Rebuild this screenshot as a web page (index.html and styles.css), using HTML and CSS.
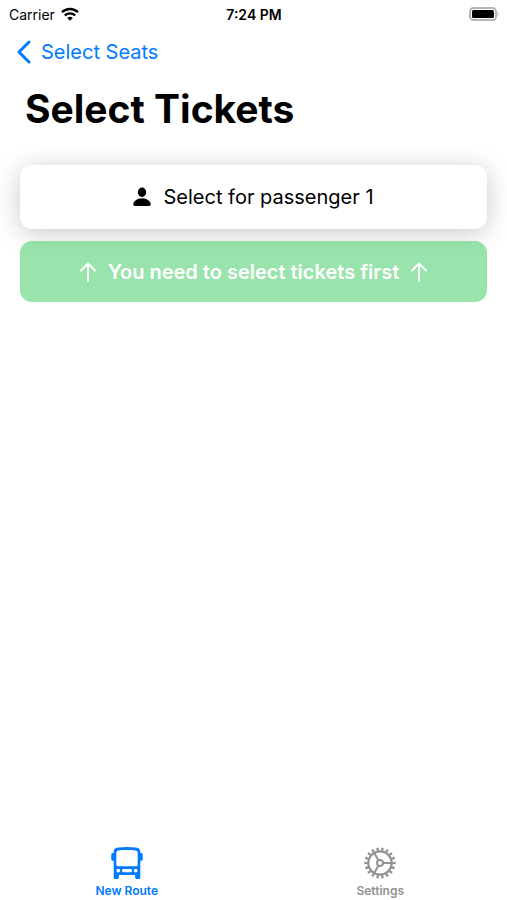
FILE: index.html
```html
<!DOCTYPE html>
<html lang="en">
<head>
    <meta charset="UTF-8">
    <meta name="viewport" content="width=device-width, initial-scale=1.0">
    <title>Select Tickets</title>
    <link rel="stylesheet" href="styles.css">
</head>
<body>

    <div class="status-bar">
        <div class="carrier">
            <span>Carrier</span>
            <svg class="wifi" viewBox="0 0 18 14" aria-hidden="true">
                <path d="M1 5.2a11.5 11.5 0 0 1 16 0" />
                <path d="M3.8 8.5a7.5 7.5 0 0 1 10.4 0" />
                <path class="dot" d="M9 13.8L6.2 11a4 4 0 0 1 5.6 0z" />
            </svg>
        </div>
        <div class="time">7:24 PM</div>
        <div class="power">
            <svg class="battery" viewBox="0 0 30 14" aria-hidden="true">
                <rect x="1" y="1" width="26" height="12" rx="3.6" fill="#fff" stroke="#b5b5b5" stroke-width="2" />
                <rect x="3" y="3" width="22" height="8" rx="1.6" />
                <path d="M28.5 4.8a2.6 2.6 0 0 1 0 4.4z" fill="#b5b5b5" />
            </svg>
        </div>
    </div>

    <header class="header">
        <a class="back" href="#">
            <svg class="chevron" viewBox="0 0 14 24" aria-hidden="true"><path d="M12 2L2 12l10 10" /></svg>
            Select Seats
        </a>
        <h1>Select Tickets</h1>
    </header>

    <main class="content">
        <button class="btn passenger" type="button">
            <svg class="person" viewBox="0 0 18 20" aria-hidden="true">
                <ellipse cx="9" cy="5.2" rx="4.2" ry="4.7" />
                <path d="M2.4 19C1 19 0.3 18.3 0.3 17.2 0.3 14.6 3.7 11.3 9 11.3s8.7 3.3 8.7 5.9c0 1.1-.7 1.8-2.1 1.8z" />
            </svg>
            Select for passenger 1
        </button>
        <button class="btn confirm" type="button" disabled>
            <svg class="arrow" viewBox="0 0 16 20" aria-hidden="true"><path d="M8 19V1.5M1 8.5l7-7 7 7" /></svg>
            You need to select tickets first
            <svg class="arrow" viewBox="0 0 16 20" aria-hidden="true"><path d="M8 19V1.5M1 8.5l7-7 7 7" /></svg>
        </button>
    </main>

    <nav class="tab-bar">
        <a class="tab active" href="#">
            <svg viewBox="0 0 32 34" aria-hidden="true" fill="currentColor">
                <path fill-rule="evenodd" d="M2.7 28V6C2.700 3 4.200 1.900 7 1.600c6-.8 12-.8 18 0 2.800.3 4.300 1.400 4.300 4.400v25.200c0 1.200-.6 1.800-1.600 1.800h-2c-1 0-1.600-.6-1.600-1.800V29H7.900v2.200c0 1.200-.6 1.800-1.600 1.800h-2c-1 0-1.600-.6-1.600-1.800zM5.300 7v11.500c0 1.200.6 1.800 1.800 1.800h17.800c1.200 0 1.800-.6 1.800-1.800V7c0-1.500-.8-2.300-2.300-2.500-5.600-.6-11.200-.6-16.800 0-1.500.2-2.300 1-2.300 2.500zM7.300 22.700a1.900 1.900 0 1 0 0 3.800 1.900 1.900 0 0 0 0-3.800zM24.700 22.700a1.900 1.900 0 1 0 0 3.800 1.900 1.900 0 0 0 0-3.800zM12.500 23c-1 0-1.500.6-1.500 1.600s.5 1.600 1.500 1.600h7c1 0 1.500-.6 1.500-1.600s-.5-1.600-1.500-1.600z" />
                <path d="M3 7H2C.9 7 .3 7.600.3 8.600v4.600c0 1 .6 1.600 1.700 1.600h1zM29 7h1c1.100 0 1.700.6 1.700 1.600v4.600c0 1-.6 1.600-1.700 1.600h-1z" />
            </svg>
            New Route
        </a>
        <a class="tab" href="#">
            <svg viewBox="0 0 32 34" aria-hidden="true" fill="none" stroke="currentColor">
                <circle cx="16" cy="17" r="11.700" stroke-width="2.200" />
                <circle cx="16" cy="17" r="14" stroke-width="3.200" pathLength="180" stroke-dasharray="4.600 5.400" stroke-dashoffset="2.300" />
                <circle cx="16" cy="17" r="3" stroke-width="2" />
                <path stroke-width="2" d="M19 17H28M14.500 14.400L10 6.600M14.500 19.600L10 27.400" />
            </svg>
            Settings
        </a>
    </nav>

</body>
</html>
```
FILE: styles.css
```css
* {
    box-sizing: border-box;
}

body {
    margin: 0;
    min-height: 100vh;
    display: flex;
    flex-direction: column;
    background-color: #fff;
    color: #000;
    font-family: Inter, "Liberation Sans", sans-serif;
}

a {
    text-decoration: none;
}

/* Status bar */
.status-bar {
    display: grid;
    grid-template-columns: 1fr auto 1fr;
    align-items: center;
    height: 28px;
    padding: 0 8px 0 9px;
    font-size: 14px;
}

.carrier {
    display: flex;
    align-items: center;
    gap: 6px;
}

.time {
    font-weight: 600;
}

.power {
    display: flex;
    justify-content: flex-end;
}

.wifi {
    width: 18px;
    height: 14px;
    fill: none;
    stroke: #000;
    stroke-width: 2.4;
}

.wifi .dot {
    fill: #000;
    stroke: none;
}

.battery {
    width: 30px;
    height: 14px;
}

/* Header */
.header {
    padding: 8px 16px 0;
}

.back {
    display: flex;
    align-items: center;
    gap: 9px;
    height: 32px;
    color: #007aff;
    font-size: 20px;
}

.chevron {
    width: 16px;
    height: 24px;
    fill: none;
    stroke: #007aff;
    stroke-width: 3;
    stroke-linecap: round;
    stroke-linejoin: round;
}

h1 {
    margin: 17px 9px 0;
    font-size: 39px;
    line-height: 48px;
    font-weight: 700;
}

/* Buttons */
.content {
    flex: 1;
    display: flex;
    flex-direction: column;
    gap: 12px;
    padding: 32px 20px 0;
}

.btn {
    display: flex;
    align-items: center;
    justify-content: center;
    gap: 12px;
    width: 100%;
    border: none;
    border-radius: 12px;
    font-family: inherit;
    font-size: 20px;
    line-height: 24px;
}

.passenger {
    padding: 20px;
    background-color: #fff;
    color: #000;
    box-shadow: 0 4px 26px rgba(0, 0, 0, 0.22);
}

.confirm {
    padding: 19px 20px 18px;
    background-color: rgba(52, 199, 89, 0.5);
    color: #fff;
    font-weight: 600;
}

.person {
    width: 18px;
    height: 20px;
}

.arrow {
    width: 16px;
    height: 20px;
    fill: none;
    stroke: #fff;
    stroke-width: 2;
    stroke-linecap: round;
    stroke-linejoin: round;
}

/* Tab bar */
.tab-bar {
    display: flex;
    padding-bottom: 2px;
}

.tab {
    flex: 1;
    display: flex;
    flex-direction: column;
    align-items: center;
    gap: 3px;
    color: #929292;
    font-size: 12px;
    line-height: 15px;
    font-weight: 600;
}

.tab svg {
    width: 32px;
    height: 34px;
}

.tab.active {
    color: #007aff;
}
```
